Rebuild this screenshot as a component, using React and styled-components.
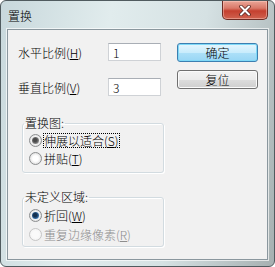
import styled, { createGlobalStyle, css } from "styled-components";

const GlobalStyle = createGlobalStyle`
  body {
    margin: 0;
    background: #ffffff;
    font-family: "Noto Sans CJK SC", "Liberation Sans", sans-serif;
    font-weight: 300;
  }
`;

const Window = styled.div`
  box-sizing: border-box;
  width: 275px;
  height: 267px;
  border: 1px solid #505b5f;
  border-radius: 6px;
  background: linear-gradient(100deg, #c8d8dc 0%, #e1eced 35%, #d5e1e3 65%, #a6b0b1 100%);
  display: flex;
  flex-direction: column;
  overflow: hidden;
`;

const TitleBar = styled.div`
  height: 28px;
  flex: none;
  display: flex;
  justify-content: space-between;
  align-items: flex-start;
  padding: 0 6px 0 7px;
`;

const Title = styled.div`
  margin-top: 8px;
  font-size: 12px;
  line-height: 14px;
  color: #000;
`;

const CloseButton = styled.div`
  box-sizing: border-box;
  width: 46px;
  height: 19px;
  border: 1px solid #6e2c24;
  border-top: none;
  border-radius: 0 0 5px 5px;
  background: linear-gradient(#eaa698 0%, #d97868 40%, #c5402f 55%, #d0624f 100%);
  box-shadow: inset 0 0 0 1px rgba(255, 210, 200, 0.45);
  display: flex;
  align-items: center;
  justify-content: center;
`;

const Client = styled.div`
  flex: 1;
  margin: 0 6px 6px 6px;
  box-sizing: border-box;
  border: 1px solid #8a979e;
  box-shadow: 0 0 0 1px rgba(255, 255, 255, 0.65);
  background: #f1f1f1;
  display: flex;
  flex-direction: column;
`;

const Top = styled.div`
  display: flex;
  padding: 13px 0 0 10px;
`;

const Fields = styled.div`
  display: flex;
  flex-direction: column;
  gap: 17px;
`;

const FieldRow = styled.div`
  display: flex;
  align-items: center;
  height: 18px;
`;

const FieldLabel = styled.label`
  width: 90px;
  font-size: 12px;
  line-height: 14px;
  color: #000;
  margin-top: 2px;
`;

const TextBox = styled.input`
  box-sizing: border-box;
  width: 53px;
  height: 18px;
  margin: 0;
  padding: 0 4px;
  border: 1px solid #cfd2d6;
  border-top-color: #a9aeb5;
  background: #fff;
  font-family: inherit;
  font-weight: inherit;
  font-size: 12px;
  color: #000;
  outline: none;
`;

const Buttons = styled.div`
  display: flex;
  flex-direction: column;
  gap: 8px;
  margin-left: 16px;
`;

const Button = styled.button`
  box-sizing: border-box;
  width: 81px;
  height: 19px;
  margin: 0;
  padding: 0;
  border-radius: 3px;
  font-family: inherit;
  font-weight: inherit;
  font-size: 12px;
  line-height: 14px;
  color: #000;
  border: 1px solid #707070;
  background: linear-gradient(#f3f3f3 0%, #ebebeb 50%, #dddddd 50%, #cfcfcf 100%);
  box-shadow: inset 0 0 0 1px #fbfbfb;
  ${(p) =>
    p.$primary &&
    css`
      border-color: #3c7fb1;
      background: linear-gradient(#e6f6fd 0%, #c9ecfc 50%, #aee0f8 50%, #98d6f5 100%);
      box-shadow: inset 0 0 0 1px #7fd9f7;
    `}
`;

const Group = styled.fieldset`
  box-sizing: border-box;
  width: 142px;
  min-width: 0;
  margin: ${(p) => p.$top}px 0 0 14px;
  padding: 0;
  border: 1px solid #d2dbe0;
  border-radius: 3px;
  box-shadow: inset 1px 1px 0 #fff, 1px 1px 0 #fff;
`;

const Legend = styled.legend`
  margin-left: 1px;
  padding: 0 1px;
  font-size: 12px;
  line-height: 14px;
  color: #000;
`;

const RadioList = styled.div`
  display: flex;
  flex-direction: column;
  gap: ${(p) => p.$gap}px;
  padding: ${(p) => p.$pt}px 0 ${(p) => p.$pb}px 6px;
`;

const RadioRow = styled.div`
  display: flex;
  align-items: center;
  height: 18px;
  gap: 1px;
  color: ${(p) => (p.$disabled ? "#8e8e8e" : "#000")};
`;

const Radio = styled.span`
  position: relative;
  box-sizing: border-box;
  flex: none;
  width: 13px;
  height: 13px;
  border-radius: 50%;
  border: 1px solid ${(p) => (p.$disabled ? "#c6c6c6" : "#8c8e8f")};
  background: ${(p) =>
    p.$disabled
      ? "radial-gradient(circle, #fafafa 0 40%, #eeeeee 100%)"
      : "radial-gradient(circle, #ffffff 0 35%, #e4e4e4 70%, #cdcdcd 100%)"};
  ${(p) =>
    p.$checked &&
    css`
      &::after {
        content: "";
        position: absolute;
        left: 2px;
        top: 2px;
        width: 7px;
        height: 7px;
        border-radius: 50%;
        background: ${p.$tone === "blue"
          ? "radial-gradient(circle at 45% 45%, #14304e 0 30%, #3a76b0 70%, #93c2ea 100%)"
          : "radial-gradient(circle at 45% 45%, #4a4a4a 0 30%, #8c8c8c 70%, #c8c8c8 100%)"};
      }
    `}
`;

const RadioText = styled.span`
  border: 1px dotted ${(p) => (p.$focus ? "#000" : "transparent")};
  padding: 0;
  font-size: 12px;
  line-height: 13px;
`;

const U = styled.span`
  text-decoration: underline;
`;

function CloseGlyph() {
  return (
    <svg width="12" height="11" viewBox="0 0 12 11">
      <path d="M2 1.5 L10 9.5 M10 1.5 L2 9.5" stroke="#5a2a24" strokeWidth="3.6" strokeLinecap="round" />
      <path d="M2 1.5 L10 9.5 M10 1.5 L2 9.5" stroke="#ffffff" strokeWidth="2" strokeLinecap="round" />
    </svg>
  );
}

export default function App() {
  return (
    <>
      <GlobalStyle />
      <Window>
        <TitleBar>
          <Title>置换</Title>
          <CloseButton>
            <CloseGlyph />
          </CloseButton>
        </TitleBar>
        <Client>
          <Top>
            <Fields>
              <FieldRow>
                <FieldLabel>
                  水平比例(<U>H</U>)
                </FieldLabel>
                <TextBox defaultValue="1" readOnly />
              </FieldRow>
              <FieldRow>
                <FieldLabel>
                  垂直比例(<U>V</U>)
                </FieldLabel>
                <TextBox defaultValue="3" readOnly />
              </FieldRow>
            </Fields>
            <Buttons>
              <Button $primary>确定</Button>
              <Button>复位</Button>
            </Buttons>
          </Top>

          <Group $top={20}>
            <Legend>置换图:</Legend>
            <RadioList $pt={1} $pb={5} $gap={0}>
              <RadioRow>
                <Radio $checked />
                <RadioText $focus>
                  伸展以适合(<U>S</U>)
                </RadioText>
              </RadioRow>
              <RadioRow>
                <Radio />
                <RadioText>
                  拼贴(<U>T</U>)
                </RadioText>
              </RadioRow>
            </RadioList>
          </Group>

          <Group $top={17}>
            <Legend>未定义区域:</Legend>
            <RadioList $pt={2} $pb={3} $gap={1}>
              <RadioRow>
                <Radio $checked $tone="blue" />
                <RadioText>
                  折回(<U>W</U>)
                </RadioText>
              </RadioRow>
              <RadioRow $disabled>
                <Radio $disabled />
                <RadioText>
                  重复边缘像素(<U>R</U>)
                </RadioText>
              </RadioRow>
            </RadioList>
          </Group>
        </Client>
      </Window>
    </>
  );
}
